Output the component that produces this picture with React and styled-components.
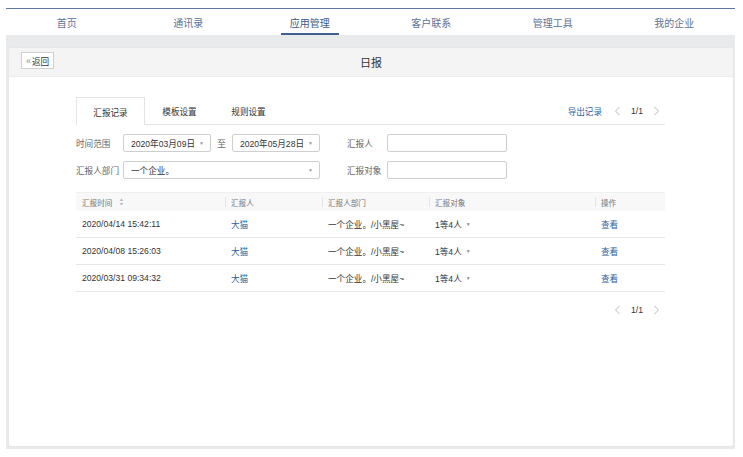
import React from "react";
import styled, { createGlobalStyle } from "styled-components";

const GlobalStyle = createGlobalStyle`
  html, body {
    margin: 0;
    padding: 0;
    background: #fff;
    font-family: "Liberation Sans", Arial, "Noto Sans CJK SC", sans-serif;
    color: #333;
  }
`;

const navItems = ["首页", "通讯录", "应用管理", "客户联系", "管理工具", "我的企业"];

const rows = [
  { time: "2020/04/14 15:42:11" },
  { time: "2020/04/08 15:26:03" },
  { time: "2020/03/31 09:34:32" },
];

const columns = [
  { title: "汇报时间", width: 149, sort: true },
  { title: "汇报人", width: 97 },
  { title: "汇报人部门", width: 107 },
  { title: "汇报对象", width: 166 },
  { title: "操作", width: 70 },
];

const Page = () => {
  return (
    <>
      <GlobalStyle />
      <Wrapper>
        <Nav>
          {navItems.map((item, i) => (
            <NavItem key={item} active={i === 2}>
              {item}
            </NavItem>
          ))}
        </Nav>
        <Main>
          <Card>
            <CardHeader>
              <BackButton>
                <span>«</span>返回
              </BackButton>
              <Title>日报</Title>
            </CardHeader>
            <Content>
              <TabBar>
                <Tab active>汇报记录</Tab>
                <Tab>模板设置</Tab>
                <Tab>规则设置</Tab>
                <TabRight>
                  <Link>导出记录</Link>
                  <Pager />
                </TabRight>
              </TabBar>

              <FilterRow>
                <Label>时间范围</Label>
                <Select width={88}>2020年03月09日</Select>
                <To>至</To>
                <Select width={88}>2020年05月28日</Select>
                <Label wide>汇报人</Label>
                <Input />
              </FilterRow>
              <FilterRow>
                <Label>汇报人部门</Label>
                <Select width={197}>一个企业。</Select>
                <Label wide>汇报对象</Label>
                <Input />
              </FilterRow>

              <Table>
                <HeadRow>
                  {columns.map((c, i) => (
                    <HeadCell key={c.title} width={c.width} first={i === 0}>
                      {c.title}
                      {c.sort && <SortIcon />}
                    </HeadCell>
                  ))}
                </HeadRow>
                {rows.map((r) => (
                  <BodyRow key={r.time}>
                    <Cell width={149}>{r.time}</Cell>
                    <Cell width={97}>
                      <Link>大猫</Link>
                    </Cell>
                    <Cell width={107}>一个企业。/小黑屋~</Cell>
                    <Cell width={166}>
                      1等4人 <Caret>▼</Caret>
                    </Cell>
                    <Cell width={70}>
                      <Link>查看</Link>
                    </Cell>
                  </BodyRow>
                ))}
              </Table>
              <BottomPager>
                <Pager />
              </BottomPager>
            </Content>
          </Card>
        </Main>
      </Wrapper>
    </>
  );
};

const Pager = () => (
  <PagerBox>
    <svg width="7" height="10" viewBox="0 0 7 10">
      <path d="M5.5 1 L1.5 5 L5.5 9" fill="none" stroke="#b8b8b8" strokeWidth="1" />
    </svg>
    <PagerText>1/1</PagerText>
    <svg width="7" height="10" viewBox="0 0 7 10">
      <path d="M1.5 1 L5.5 5 L1.5 9" fill="none" stroke="#b8b8b8" strokeWidth="1" />
    </svg>
  </PagerBox>
);

const SortIcon = () => (
  <SortSvg width="5" height="8" viewBox="0 0 5 8">
    <path d="M2.5 0.5 L4.5 3 L0.5 3 Z" fill="#bbb" />
    <path d="M2.5 7.5 L4.5 5 L0.5 5 Z" fill="#bbb" />
  </SortSvg>
);

const Wrapper = styled.div`
  padding-top: 8px;
  margin: 0 8px 0 6px;
`;

const Nav = styled.div`
  border-top: 1px solid #5b79a6;
  height: 26px;
  display: grid;
  grid-template-columns: repeat(6, 1fr);
  background: #fff;
`;

const NavItem = styled.div`
  position: relative;
  display: flex;
  align-items: center;
  justify-content: center;
  font-size: 10px;
  color: ${(p) => (p.active ? "#3d5b8a" : "#5d7396")};
  &::after {
    content: "";
    display: ${(p) => (p.active ? "block" : "none")};
    position: absolute;
    bottom: 0;
    left: 50%;
    width: 58px;
    margin-left: -29px;
    height: 2px;
    background: #3f5f8f;
  }
`;

const Main = styled.div`
  background: #e9eaec;
  height: 414px;
  padding: 13px 2px 0 3px;
  box-sizing: border-box;
`;

const Card = styled.div`
  background: #fff;
  height: 398px;
  border-radius: 2px;
  box-shadow: 0 0 1px rgba(0, 0, 0, 0.12);
  overflow: hidden;
`;

const CardHeader = styled.div`
  position: relative;
  height: 28px;
  background: #f4f4f4;
  border-bottom: 1px solid #ececec;
  display: flex;
  align-items: center;
  justify-content: center;
`;

const BackButton = styled.div`
  position: absolute;
  left: 12px;
  top: 4px;
  height: 17px;
  width: 33px;
  box-sizing: border-box;
  border: 1px solid #d0d0d0;
  background: #fff;
  font-size: 8.6px;
  color: #333;
  display: flex;
  align-items: center;
  justify-content: center;
  span {
    color: #888;
    font-size: 9px;
    margin-right: 1px;
  }
`;

const Title = styled.div`
  font-size: 11px;
  color: #333;
`;

const Content = styled.div`
  width: 589px;
  margin-left: 67px;
  padding-top: 20px;
`;

const TabBar = styled.div`
  display: flex;
  height: 27px;
  border-bottom: 1px solid #e4e4e4;
  align-items: stretch;
`;

const Tab = styled.div`
  width: 69px;
  box-sizing: border-box;
  display: flex;
  align-items: center;
  justify-content: center;
  font-size: 8.6px;
  color: #333;
  background: #fff;
  border: 1px solid ${(p) => (p.active ? "#e4e4e4" : "transparent")};
  border-bottom: none;
  margin-bottom: ${(p) => (p.active ? "-1px" : "0")};
`;

const TabRight = styled.div`
  margin-left: auto;
  display: flex;
  align-items: center;
  padding-right: 5px;
  gap: 12px;
`;

const Link = styled.span`
  color: #2d5f9c;
  font-size: 8.6px;
`;

const PagerBox = styled.div`
  display: flex;
  align-items: center;
  gap: 10px;
`;

const PagerText = styled.span`
  font-size: 8.6px;
  color: #333;
`;

const FilterRow = styled.div`
  display: flex;
  align-items: center;
  height: 18px;
  margin-top: 9px;
  &:first-of-type {
    margin-top: 10px;
  }
`;

const Label = styled.div`
  width: ${(p) => (p.wide ? "40px" : "47px")};
  margin-left: ${(p) => (p.wide ? "27px" : "0")};
  font-size: 8.6px;
  color: #666;
  white-space: nowrap;
`;

const Select = styled.div`
  width: ${(p) => p.width}px;
  height: 18px;
  box-sizing: border-box;
  border: 1px solid #cfcfcf;
  border-radius: 2px;
  padding-left: 7px;
  font-size: 8.6px;
  color: #333;
  display: flex;
  align-items: center;
  position: relative;
  &::after {
    content: "▼";
    position: absolute;
    right: 6px;
    font-size: 5px;
    color: #999;
  }
`;

const To = styled.div`
  width: 21px;
  text-align: center;
  font-size: 8.6px;
  color: #666;
`;

const Input = styled.div`
  width: 120px;
  height: 18px;
  box-sizing: border-box;
  border: 1px solid #cfcfcf;
  border-radius: 2px;
`;

const Table = styled.div`
  margin-top: 13px;
`;

const HeadRow = styled.div`
  display: flex;
  height: 18px;
  background: #f8f8f8;
  border-top: 1px solid #f0f0f0;
`;

const HeadCell = styled.div`
  width: ${(p) => p.width}px;
  box-sizing: border-box;
  padding-left: 6px;
  display: flex;
  align-items: center;
  font-size: 7.6px;
  color: #777;
  position: relative;
  &::before {
    content: "";
    display: ${(p) => (p.first ? "none" : "block")};
    position: absolute;
    left: 0;
    top: 4px;
    bottom: 4px;
    width: 1px;
    background: #e4e4e4;
  }
`;

const SortSvg = styled.svg`
  margin-left: 7px;
`;

const BodyRow = styled.div`
  display: flex;
  height: 27px;
  border-bottom: 1px solid #e6e6e6;
  box-sizing: border-box;
`;

const Cell = styled.div`
  width: ${(p) => p.width}px;
  box-sizing: border-box;
  padding-left: 6px;
  display: flex;
  align-items: center;
  font-size: 8.6px;
  color: #333;
  white-space: nowrap;
`;

const Caret = styled.span`
  font-size: 5px;
  color: #888;
  margin-left: 4px;
`;

const BottomPager = styled.div`
  display: flex;
  justify-content: flex-end;
  padding-right: 5px;
  margin-top: 13px;
`;

export default Page;
